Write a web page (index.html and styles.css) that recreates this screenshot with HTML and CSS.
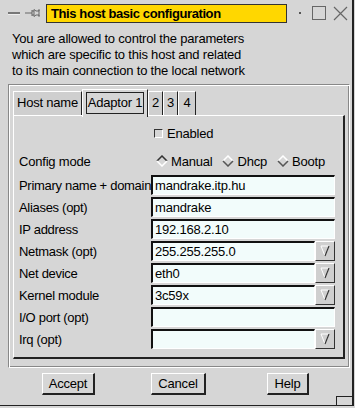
FILE: index.html
```html
<!DOCTYPE html>
<html lang="en">
<head>
    <meta charset="UTF-8">
    <title>This host basic configuration</title>
    <link rel="stylesheet" href="styles.css">
</head>
<body>

<div class="window">
    <!-- Barra de título -->
    <div class="titlebar">
        <span class="tb-min"></span>
        <svg class="tb-pin" width="16" height="10" viewBox="0 0 16 10">
            <path d="M0 5h7M7 2v6M7 3h2M7 7h2M9 1.5l2 1.5h3V1.5v7V7h-3l-2 1.5z" fill="none" stroke="#666" stroke-width="1"/>
        </svg>
        <div class="title">This host basic configuration</div>
        <span class="tb-dot"></span>
        <span class="tb-max"></span>
        <svg class="tb-close" width="15" height="15" viewBox="0 0 15 15">
            <path d="M1 1l13 13M14 1L1 14" stroke="#666" stroke-width="1.2"/>
        </svg>
    </div>

    <p class="intro">You are allowed to control the parameters<br>which are specific to this host and related<br>to its main connection to the local network</p>

    <!-- Notebook -->
    <div class="frame">
        <div class="tabs">
            <div class="tab tab-host">Host name</div>
            <div class="tab active"><span>Adaptor 1</span></div>
            <div class="tab num">2</div>
            <div class="tab num">3</div>
            <div class="tab num">4</div>
        </div>
        <div class="panel">
            <div class="check-row">
                <span class="checkbox"></span>
                <span>Enabled</span>
            </div>
            <div class="row">
                <span class="label">Config mode</span>
                <div class="radios">
                    <label class="radio"><svg width="12" height="12" viewBox="0 0 12 12"><path d="M1 6L6 1l5 5" fill="none" stroke="#333" stroke-width="1.5"/><path d="M1 6l5 5 5-5" fill="none" stroke="#fff" stroke-width="1.5"/></svg>Manual</label>
                    <label class="radio"><svg width="12" height="12" viewBox="0 0 12 12"><path d="M1 6L6 1l5 5" fill="none" stroke="#fff" stroke-width="1.5"/><path d="M1 6l5 5 5-5" fill="none" stroke="#555" stroke-width="1.5"/></svg>Dhcp</label>
                    <label class="radio"><svg width="12" height="12" viewBox="0 0 12 12"><path d="M1 6L6 1l5 5" fill="none" stroke="#fff" stroke-width="1.5"/><path d="M1 6l5 5 5-5" fill="none" stroke="#555" stroke-width="1.5"/></svg>Bootp</label>
                </div>
            </div>
            <div class="fields">
                <span class="label">Primary name + domain</span>
                <div class="entry"><input type="text" value="mandrake.itp.hu"></div>

                <span class="label">Aliases (opt)</span>
                <div class="entry"><input type="text" value="mandrake"></div>

                <span class="label">IP address</span>
                <div class="entry"><input type="text" value="192.168.2.10"></div>

                <span class="label">Netmask (opt)</span>
                <div class="entry"><input type="text" value="255.255.255.0"><button class="drop"><svg width="10" height="14" viewBox="0 0 10 14"><path d="M1 2h8L5 12z" fill="none" stroke="#fff" stroke-width="1"/><path d="M9 2L5 12" stroke="#333" stroke-width="1.2"/></svg></button></div>

                <span class="label">Net device</span>
                <div class="entry"><input type="text" value="eth0"><button class="drop"><svg width="10" height="14" viewBox="0 0 10 14"><path d="M1 2h8L5 12z" fill="none" stroke="#fff" stroke-width="1"/><path d="M9 2L5 12" stroke="#333" stroke-width="1.2"/></svg></button></div>

                <span class="label">Kernel module</span>
                <div class="entry"><input type="text" value="3c59x"><button class="drop"><svg width="10" height="14" viewBox="0 0 10 14"><path d="M1 2h8L5 12z" fill="none" stroke="#fff" stroke-width="1"/><path d="M9 2L5 12" stroke="#333" stroke-width="1.2"/></svg></button></div>

                <span class="label">I/O port (opt)</span>
                <div class="entry"><input type="text" value=""></div>

                <span class="label">Irq (opt)</span>
                <div class="entry"><input type="text" value=""><button class="drop"><svg width="10" height="14" viewBox="0 0 10 14"><path d="M1 2h8L5 12z" fill="none" stroke="#fff" stroke-width="1"/><path d="M9 2L5 12" stroke="#333" stroke-width="1.2"/></svg></button></div>
            </div>
        </div>
    </div>

    <!-- Botões -->
    <div class="buttons">
        <button class="btn btn-accept">Accept</button>
        <button class="btn btn-cancel">Cancel</button>
        <button class="btn btn-help">Help</button>
    </div>
    <span class="corner"></span>
</div>

</body>
</html>
```

FILE: styles.css
```css
body {
    margin: 0;
    padding: 0;
    background-color: #d6d6d6;
    font-family: "Liberation Sans", Arial, sans-serif;
    font-size: 13px;
    letter-spacing: -0.2px;
    color: #000;
}
.window {
    position: relative;
    width: 352px;
    height: 405px;
    border-right: 2px solid #222;
    border-bottom: 1px solid #222;
    background-color: #d6d6d6;
    overflow: hidden;
}
.titlebar {
    display: flex;
    align-items: center;
    height: 26px;
    padding-left: 8px;
}
.tb-min {
    width: 12px;
    height: 2px;
    background-color: #777;
    border-bottom: 1px solid #eee;
}
.tb-pin {
    margin-left: 5px;
}
.title {
    margin-left: 5px;
    width: 235px;
    height: 17px;
    line-height: 17px;
    padding-left: 4px;
    background-color: #ffd700;
    border: 1px solid #333;
    font-weight: bold;
    font-size: 13px;
    letter-spacing: -0.4px;
}
.tb-dot {
    width: 2px;
    height: 2px;
    margin-left: 12px;
    background-color: #555;
}
.tb-max {
    width: 12px;
    height: 12px;
    margin-left: 11px;
    border: 1px solid #666;
}
.tb-close {
    margin-left: 7px;
}
.intro {
    margin: 5px 0 0 12px;
    line-height: 16px;
}
.frame {
    margin: 5px 0 0 8px;
    width: 336px;
    height: 278px;
    border-top: 1px solid #888;
    border-left: 1px solid #888;
    border-right: 1px solid #fff;
    border-bottom: 1px solid #fff;
    box-shadow: inset 1px 1px 0 #fff, inset -1px -1px 0 #888;
    padding: 4px 0 0 4px;
}
.tabs {
    display: flex;
    align-items: flex-end;
    height: 28px;
    position: relative;
    z-index: 1;
    margin-bottom: -2px;
}
.tab {
    box-sizing: border-box;
    height: 24px;
    line-height: 22px;
    text-align: center;
    background-color: #cfcfcf;
    border-top: 1px solid #fff;
    border-left: 1px solid #fff;
    border-right: 1px solid #222;
    margin-bottom: 2px;
}
.tab-host {
    width: 69px;
}
.tab.num {
    width: 15px;
}
.tab.num:last-child {
    width: 18px;
}
.tab.active {
    width: 66px;
    height: 28px;
    margin-bottom: 0;
    padding: 2px 3px 0;
    background-color: #d6d6d6;
    line-height: 20px;
}
.tab.active span {
    display: block;
    height: 20px;
    border: 1px solid #222;
}
.panel {
    width: 324px;
    height: 241px;
    border-top: 1px solid #fff;
    border-left: 1px solid #fff;
    border-right: 2px solid #222;
    border-bottom: 2px solid #222;
    padding: 0 0 0 5px;
}
.check-row {
    display: flex;
    align-items: center;
    gap: 4px;
    height: 32px;
    margin-left: 135px;
    padding-top: 1px;
}
.checkbox {
    width: 7px;
    height: 7px;
    border-top: 1px solid #333;
    border-left: 1px solid #333;
    border-right: 1px solid #fff;
    border-bottom: 1px solid #fff;
}
.row {
    display: flex;
    align-items: center;
    height: 24px;
}
.row .label {
    width: 137px;
}
.radios {
    display: flex;
    gap: 10px;
}
.radio {
    display: flex;
    align-items: center;
    gap: 3px;
}
.fields {
    display: grid;
    grid-template-columns: 132px 184px;
    grid-auto-rows: 20px;
    row-gap: 2px;
    align-items: center;
    margin-top: 2px;
}
.label {
    white-space: nowrap;
}
.fields .label {
    letter-spacing: -0.3px;
}
.entry {
    display: flex;
    height: 20px;
}
.entry input {
    flex: 1;
    min-width: 0;
    box-sizing: border-box;
    height: 20px;
    margin: 0;
    padding: 0 2px;
    background-color: #f2fcfb;
    border-top: 2px solid #111;
    border-left: 2px solid #111;
    border-right: 1px solid #fff;
    border-bottom: 1px solid #fff;
    font-family: "Liberation Sans", Arial, sans-serif;
    font-size: 13px;
    letter-spacing: -0.2px;
    color: #000;
    outline: none;
}
.drop {
    width: 20px;
    height: 20px;
    margin: 0;
    padding: 0;
    background-color: #cfcfcf;
    border-top: 1px solid #fff;
    border-left: 1px solid #fff;
    border-right: 1px solid #333;
    border-bottom: 1px solid #333;
    display: flex;
    align-items: center;
    justify-content: center;
}
.buttons {
    display: flex;
    margin-top: 5px;
    height: 22px;
}
.btn {
    height: 22px;
    margin: 0;
    padding: 0;
    background-color: #d6d6d6;
    border-top: 1px solid #fff;
    border-left: 1px solid #fff;
    border-right: 2px solid #222;
    border-bottom: 2px solid #222;
    font-family: "Liberation Sans", Arial, sans-serif;
    font-size: 13px;
    letter-spacing: -0.2px;
    color: #000;
}
.btn-accept {
    margin-left: 42px;
    width: 53px;
}
.btn-cancel {
    margin-left: 56px;
    width: 55px;
}
.btn-help {
    margin-left: 61px;
    width: 42px;
}
.corner {
    position: absolute;
    right: 0;
    bottom: 0;
    width: 15px;
    height: 8px;
    border-top: 1px solid #222;
    border-left: 1px solid #222;
}
```
